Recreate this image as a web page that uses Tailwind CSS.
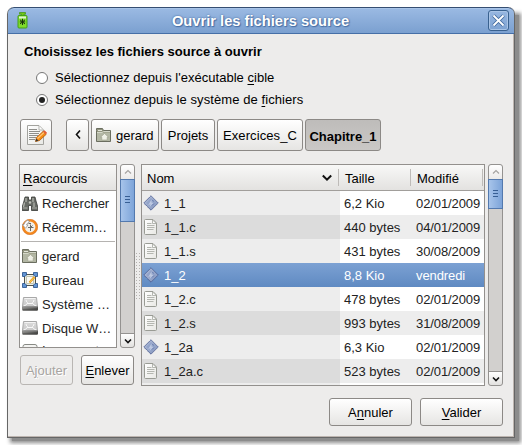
<!DOCTYPE html>
<html lang="fr">
<head>
<meta charset="utf-8">
<title>Ouvrir les fichiers source</title>
<script src="https://cdn.jsdelivr.net/npm/@tailwindcss/browser@4"></script>
</head>
<body class="w-[522px] h-[445px] overflow-hidden bg-white text-black text-[13px] leading-[16px] font-['Liberation_Sans',Arial,sans-serif]">
<svg width="0" height="0" class="absolute">
  <defs>
    <linearGradient id="paper" x1="0" y1="0" x2="1" y2="1"><stop offset="0" stop-color="#fff"/><stop offset="1" stop-color="#e8e8e4"/></linearGradient>
    <linearGradient id="metal" x1="0" y1="0" x2="0" y2="1"><stop offset="0" stop-color="#dcdcdc"/><stop offset="1" stop-color="#c8c8c8"/></linearGradient>
    <linearGradient id="base" x1="0" y1="0" x2="1" y2="0"><stop offset="0" stop-color="#8a8a88"/><stop offset="1" stop-color="#484846"/></linearGradient>
    <linearGradient id="gem" x1="0" y1="0" x2="1" y2="1"><stop offset="0" stop-color="#b4c1dc"/><stop offset="1" stop-color="#7f91ba"/></linearGradient>
  </defs>
  <symbol id="exe" viewBox="0 0 16 16">
    <path d="M8 .8 15.2 8 8 15.2.8 8Z" fill="url(#gem)" stroke="#42538a" stroke-width="1" stroke-dasharray="1 .4"/>
    <path d="M8 3 12.8 8 8 12.8 3.2 8Z" fill="#93a4ca"/>
    <path d="M5 10.500 8.500 4.500 8.500 7.500 10.500 8 6.500 12 7.500 9Z" fill="#bdc9e2"/>
    <path d="M9.500 5 10.500 6.500M9 10.500 11 8.500" stroke="#667bad"/>
  </symbol>
  <symbol id="doc" viewBox="0 0 14 16">
    <path d="M1.500.5H9L12.500 4V14.500Q12.500 15.500 11.500 15.500H1.500Q.5 15.500.5 14.500V1.500Q.5.5 1.500.5Z" fill="url(#paper)" stroke="#999b94"/>
    <path d="M8.500 1V4.500H12.500Z" fill="#fff" stroke="#a2a49d" stroke-width=".8"/>
    <path d="M3 4.500H7.500M3 6.500H10.500M3 8.500H10.500M3 10.500H9.500" stroke="#b4b6b0"/>
  </symbol>
  <symbol id="home" viewBox="0 0 16 16">
    <path d="M.5 3.500V1.500H6.500L7.500 3.500H14.500V14.500H.5Z" fill="#92957f" stroke="#6b6e60"/>
    <path d="M2 3.500H6" stroke="#e4e6dc"/>
    <path d="M1 5.500H14V14H1Z" fill="#b3b7a4"/>
    <path d="M1 5.500H6L7.500 4.500H14" stroke="#d5d8ca" fill="none"/>
    <path d="M8.500 6.500 12.500 10.200H11.200V13H5.800V10.200H4.500Z" fill="#eff0e6" stroke="#9a9e8b" stroke-width=".6"/>
  </symbol>
  <symbol id="disk" viewBox="0 0 16 14">
    <path d="M1.500.5H14.500L15.500 9.500H.5Z" fill="url(#metal)" stroke="#a8a8a8"/>
    <path d="M2.500 1.500H13.500" stroke="#f4f4f4"/>
    <path d="M1.500 9Q4.500 8.500 5 6.500H11Q11.500 8.500 14.500 9M4 3Q4.500 5.500 6 6.300M12 3Q11.500 5.500 10 6.300" fill="none" stroke="#f8f8f8"/>
    <path d="M0 9.500H16V13.500H0Z" fill="url(#base)"/>
    <path d="M.5 10H15.500" stroke="#a0a09e" stroke-width=".8"/><path d="M1 13H15" stroke="#41413f"/>
  </symbol>
  <symbol id="up" viewBox="0 0 8 8"><path d="M1 5.500 4 2.500 7 5.500" fill="none" stroke="#a5a3a1" stroke-width="1.200"/></symbol>
  <symbol id="down" viewBox="0 0 8 8"><path d="M1 2.500 4 5.500 7 2.500" fill="none" stroke="#111" stroke-width="1.600"/></symbol>
</svg>

<div class="relative ml-[7px] mt-[7px] w-[508px] h-[430px]">
  <div class="absolute left-[5px] top-[8px] w-[507px] h-[426px] bg-[#8c8c8c] shadow-[0_0_4px_2px_#8c8c8c]"></div>
  <main class="relative w-[508px] h-[431px] rounded-t-[7px] overflow-hidden bg-[#edeceb] border border-t-0 border-[#666] shadow-[inset_-1px_-1px_0_#bdb5b0]">
    <header class="-mx-px flex h-[27px] items-center justify-between rounded-t-[7px] border border-t-[#354e72] border-x-[#4e73a6] border-b-[#466fa7] bg-linear-to-b from-[#9bbae3] to-[#7ba0d0] pl-[9px] pr-[5px] shadow-[inset_0_1px_0_#a8c4e8]">
      <svg class="-mt-px" width="13" height="18" viewBox="0 0 13 18"><path d="M2.500 1.500H8.500V3.200H7V5H4.500V3.200H2.500Z" fill="#73c916" stroke="#3f9010" stroke-width=".7"/><rect x="1" y="4.500" width="9" height="12.500" rx="1" fill="#80dc2c" stroke="#43a014"/><path d="M2 5.500H9V7.500H2Z" fill="#e0f3d2"/><path d="M5.500 7.800V14M3 8.800 8 13M8 8.800 3 13M2.800 10.900H8.200" stroke="#17330c" stroke-width="1"/></svg>
      <h1 class="ml-[3px] text-[14.7px] font-bold text-white [text-shadow:0_0_2px_#375d92,1px_1px_1px_#4c74ab]">Ouvrir les fichiers source</h1>
      <button class="flex size-[21px] items-center justify-center rounded-[3px] border border-[#39618f] shadow-[0_0_0_1px_#a9c4e6_inset]"><svg width="15" height="15" viewBox="0 0 15 15"><path d="M2.500 2.500 12.500 12.500M12.500 2.500 2.500 12.500" stroke="#426b9f" stroke-width="3.600"/><path d="M2.500 2.500 12.500 12.500M12.500 2.500 2.500 12.500" stroke="#fff" stroke-width="1.800"/></svg></button>
    </header>

    <section class="pl-4 pt-[10px]">
      <h2 class="font-bold tracking-[0.02px]">Choisissez les fichiers source à ouvrir</h2>
      <div class="mt-[10px] flex items-center gap-[7px] pl-[12px]"><span class="size-3 rounded-full border border-[#777] bg-white"></span><span class="tracking-[0.02px]">Sélectionnez depuis l'exécutable <u class="underline-offset-2">c</u>ible</span></div>
      <div class="mt-[6px] flex items-center gap-[7px] pl-[12px]"><span class="flex size-3 items-center justify-center rounded-full border border-[#777] bg-white"><i class="size-[6px] rounded-full bg-[#222]"></i></span><span class="tracking-[0.08px]">Sélectionnez depuis le système de <u class="underline-offset-2">f</u>ichiers</span></div>
    </section>

    <nav class="ml-[12px] mt-[11px] flex h-8 gap-[2px]">
      <button class="mr-3 flex w-8 items-center justify-center rounded-[3px] border border-[#8c8986] bg-linear-to-b from-white to-[#e6e5e3]">
        <svg width="22" height="22" viewBox="0 0 22 22"><path d="M2.500 1.500H14L18.500 6V20.500H2.500Z" fill="url(#paper)" stroke="#a3a39e"/><path d="M14 2V6H18" fill="#fff" stroke="#b4b4af"/><path d="M4 5.500H12M4 7.500H15M4 9.500H14M4 11.500H13M4 13.500H11M4 15.500H10" stroke="#8f8f8b"/><path d="M10.500 17.500 11.500 13.500 18 7.500 21 10.500 14.500 16.500Z" fill="#f68b12" stroke="#ae5707" stroke-width=".8"/><path d="M12.500 14.500 19 8.500" stroke="#ffc575" stroke-width="1.200"/><path d="M18 7.500 19.500 6.200 22 8.700 21 10.500Z" fill="#e45b30"/><path d="M10.500 17.500 11.300 14.500 13.500 16.700Z" fill="#3a3a35"/></svg>
      </button>
      <button class="flex w-[23px] items-center justify-center rounded-[3px] border border-[#8c8986] bg-linear-to-b from-white to-[#e6e5e3]"><svg width="8" height="10" viewBox="0 0 8 10"><path d="M6 .5 2.500 4.500 6 8.500" fill="none" stroke="#111" stroke-width="1.600"/></svg></button>
      <button class="flex w-[68px] items-center gap-[4px] rounded-[3px] border border-[#8c8986] bg-linear-to-b from-white to-[#e6e5e3] pl-[4px] pt-[2px]"><svg class="-mt-[2px]" width="16" height="16"><use href="#home"/></svg>gerard</button>
      <button class="w-[54px] rounded-[3px] border border-[#8c8986] bg-linear-to-b from-white to-[#e6e5e3] pt-[2px]">Projets</button>
      <button class="w-[86px] rounded-[3px] border border-[#8c8986] bg-linear-to-b from-white to-[#e6e5e3] pt-[2px] tracking-[0.1px]">Exercices_C</button>
      <button class="w-[76px] rounded-[3px] border border-[#8c8986] bg-linear-to-b from-[#bebcba] to-[#cac8c6] pt-[4px] font-bold">Chapitre_1</button>
    </nav>

    <div class="ml-[11px] mt-[13px] flex">
      <aside class="w-[116px]">
        <div class="flex justify-between">
          <div class="h-[184px] w-[98px] overflow-hidden border border-[#93908d] bg-white">
            <div class="h-[26px] border-b border-[#a19e9b] bg-linear-to-b from-[#f8f8f7] to-[#e3e2e0] pl-[3px] pt-[6px]"><u class="underline-offset-2">R</u>accourcis</div>
            <div class="flex h-6 items-center gap-[4px] pl-[2px] pt-[2px] text-[#222]">
              <svg class="-mt-px" width="16" height="16" viewBox="0 0 16 16"><path d="M3 1H6.500V4H9.500V1H13L14 5 15.800 11V14.500H9.500V9.500H6.500V14.500H.2V11L2 5Z" fill="#686b65" stroke="#363935" stroke-width=".8"/><path d="M4 2V6M11 2V6M2.500 6.500 1.500 11M12 6.500V11" stroke="#b5b8b0" stroke-width="1.200"/><path d="M.8 12H5.500M10 12H15" stroke="#969992" stroke-width="1.500"/><circle cx="8" cy="6.500" r="1.200" fill="#c1c4bc"/></svg>Rechercher</div>
            <div class="flex h-6 items-center gap-[4px] pl-[2px] pt-[2px] text-[#222]">
              <svg class="-mt-[2px]" width="16" height="16" viewBox="0 0 16 16"><circle cx="8" cy="8" r="6.600" fill="#f2f0ea" stroke="#f58a20" stroke-width="2.400"/><circle cx="8" cy="8" r="7.700" fill="none" stroke="#cf6410" stroke-width=".5"/><path d="M8.500 5.500V12M6 8.500H11.500M8.500 8.500 10.500 6.500M6.500 4.500H9" stroke="#6a6a66" stroke-width="1"/><path d="M.3 5.500 3.500 9.300 6 6H4.500Q5 3.800 7.500 3L6 1Q2.500 2.500 2 5.500Z" fill="#fff" stroke="#888" stroke-width=".7"/></svg>Récemm…</div>
            <div class="mx-px mt-[2px] mb-[2px] h-px bg-[#b5b3b1]"></div>
            <div class="flex h-6 items-center gap-[4px] pl-[2px] pt-[2px] text-[#222]"><svg class="-mt-[2px]" width="16" height="16"><use href="#home"/></svg>gerard</div>
            <div class="flex h-6 items-center gap-[4px] pl-[2px] pt-[2px] text-[#222]">
              <svg class="-mt-[2px]" width="16" height="16" viewBox="0 0 16 16"><path d="M2.500 2.500H13.500V13.500H2.500Z" fill="#eceee3" stroke="#52534a"/><path d="M4.500 4.500H11.500V11.500H4.500Z" fill="#fafaf5" stroke="#bfc2b0"/><path d="M.5.5H4.500V3L3 4.500H.5ZM15.500.5H11.500V3L13 4.500H15.500ZM.5 15.500H4.500V13L3 11.500H.5ZM15.500 15.500H11.500V13L13 11.500H15.500Z" fill="#6194d3" stroke="#234e88" stroke-width=".8"/><path d="M7.500 10.500 12.500 5" stroke="#e8961a" stroke-width="2.200"/><path d="M7.500 10.500 12 5.500" stroke="#fbd456"/></svg>Bureau</div>
            <div class="flex h-6 items-center gap-[4px] pl-[2px] pt-[2px] text-[#222]"><svg class="-mt-[2px]" width="16" height="14"><use href="#disk"/></svg><span class="tracking-[0.1px]">Système …</span></div>
            <div class="flex h-6 items-center gap-[4px] pl-[2px] pt-[2px] text-[#222]"><svg class="-mt-[2px]" width="16" height="14"><use href="#disk"/></svg>Disque W…</div>
            <div class="-mt-px flex h-6 items-center gap-[4px] pl-[2px] text-[#222]"><svg width="16" height="16" viewBox="0 0 16 16"><rect x="1" y="1.500" width="14" height="13" rx="2" fill="#f4f4f2" stroke="#888a85"/></svg>Images et</div>
          </div>
          <div class="flex h-[184px] w-[15px] flex-col rounded-[3px] border border-[#949290] bg-[#d2d0ce]">
            <span class="flex h-[14px] items-center justify-center rounded-t-[3px] bg-linear-to-b from-white to-[#ebeae9]"><svg width="8" height="8"><use href="#up"/></svg></span>
            <span class="-mx-px flex h-[43px] flex-col items-center justify-center gap-[2px] border border-[#5379ae] bg-linear-to-r from-[#a7c4ea] to-[#7da4d9] pb-[3px]"><i class="h-px w-[5px] bg-[#385f94]"></i><i class="h-px w-[5px] bg-[#385f94]"></i><i class="h-px w-[5px] bg-[#385f94]"></i></span>
            <span class="mt-auto flex h-[14px] items-center justify-center rounded-b-[3px] border-t border-[#949290] bg-linear-to-b from-white to-[#e2e1df]"><svg width="8" height="8"><use href="#down"/></svg></span>
          </div>
        </div>
        <div class="mt-[7px] ml-px flex gap-[8px]">
          <button class="h-[30px] w-[53px] rounded-[3px] border border-[#b9b6b3] bg-[#edeceb] pt-[2px] text-[#a7a4a1] [text-shadow:1px_1px_0_#fff]">A<u class="underline-offset-2">j</u>outer</button>
          <button class="h-[30px] w-[53px] rounded-[3px] border border-[#8c8986] bg-linear-to-b from-white to-[#e6e5e3] pt-[2px]"><u class="underline-offset-2">E</u>nlever</button>
        </div>
      </aside>
      <div class="mt-[88px] h-[49px] w-[6px] bg-[radial-gradient(circle,#b4b1ae_0.7px,transparent_0.9px)] bg-size-[3px_3px]"></div>
      <div class="h-[222px] w-[344px] overflow-hidden border border-[#93908d] bg-white">
        <div class="flex h-[26px] border-b border-[#a19e9b] bg-linear-to-b from-[#f8f8f7] to-[#e3e2e0] py-[4px]">
          <div class="flex w-[197px] items-center justify-between border-r border-[#bebbb8] pl-[5px] pr-[6px]"><span class="pt-[2px]">Nom</span><svg width="10" height="8" viewBox="0 0 10 8"><path d="M.8 1.500 5 5.700 9.200 1.500" fill="none" stroke="#111" stroke-width="2"/></svg></div>
          <div class="flex w-[72px] items-center border-r border-[#bebbb8] pl-[6px] pt-[2px]">Taille</div>
          <div class="flex w-[72px] items-center border-r border-[#bebbb8] pl-[6px] pt-[2px]">Modifié</div>
        </div>
        <div id="rows"></div>
        <div class="flex h-1"><span class="w-[198px] bg-[#ededed]"></span></div>
      </div>
      <div class="ml-[3px] flex h-[222px] w-[15px] flex-col rounded-[3px] border border-[#949290] bg-[#d2d0ce]">
        <span class="flex h-[14px] items-center justify-center rounded-t-[3px] bg-linear-to-b from-white to-[#ebeae9]"><svg width="8" height="8"><use href="#up"/></svg></span>
        <span class="-mx-px flex h-[30px] flex-col items-center justify-center gap-[2px] border border-[#5379ae] bg-linear-to-r from-[#a7c4ea] to-[#7da4d9] pb-[2px]"><i class="h-px w-[5px] bg-[#385f94]"></i><i class="h-px w-[5px] bg-[#385f94]"></i><i class="h-px w-[5px] bg-[#385f94]"></i></span>
        <span class="mt-auto flex h-[14px] items-center justify-center rounded-b-[3px] border-t border-[#949290] bg-linear-to-b from-white to-[#e2e1df]"><svg width="8" height="8"><use href="#down"/></svg></span>
      </div>
    </div>

    <footer class="mt-[12px] flex justify-end gap-[8px] pr-[11px]">
      <button class="h-[28px] w-[83px] rounded-[3px] border border-[#8c8986] bg-linear-to-b from-white to-[#e6e5e3] pt-px">A<u class="underline-offset-2">n</u>nuler</button>
      <button class="h-[28px] w-[83px] rounded-[3px] border border-[#8c8986] bg-linear-to-b from-white to-[#e6e5e3] pt-px"><u class="underline-offset-2">V</u>alider</button>
    </footer>
  </main>
</div>
<script>
const files = [
  ['exe', '1_1', '6,2 Kio', '02/01/2009'],
  ['doc', '1_1.c', '440 bytes', '04/01/2009'],
  ['doc', '1_1.s', '431 bytes', '30/08/2009'],
  ['exe', '1_2', '8,8 Kio', 'vendredi'],
  ['doc', '1_2.c', '478 bytes', '02/01/2009'],
  ['doc', '1_2.s', '993 bytes', '31/08/2009'],
  ['exe', '1_2a', '6,3 Kio', '02/01/2009'],
  ['doc', '1_2a.c', '523 bytes', '02/01/2009'],
];
document.getElementById('rows').innerHTML = files.map(([icon, name, size, date], i) => {
  const selected = i === 3, odd = i % 2 === 1;
  const row = selected ? 'bg-linear-to-b from-[#7ca1d3] to-[#5f8ac2] text-white' : odd ? 'bg-[#ededed] text-[#222]' : 'bg-white text-[#222]';
  const first = selected ? '' : odd ? 'bg-[#dcdcdc]' : 'bg-[#ededed]';
  return `<div class="flex h-6 items-center ${row}">
    <div class="flex h-6 w-[198px] items-center pl-[1px] ${first}"><span class="flex w-[16px] justify-center"><svg width="${icon === 'exe' ? 16 : 14}" height="16"><use href="#${icon}"/></svg></span><span class="ml-[5px] pt-[2px]">${name}</span></div>
    <div class="w-[72px] pl-[4px] pt-[2px]">${size}</div><div class="pl-[4px] pt-[2px] tracking-[-0.1px]">${date}</div></div>`;
}).join('');
</script>
</body>
</html>
